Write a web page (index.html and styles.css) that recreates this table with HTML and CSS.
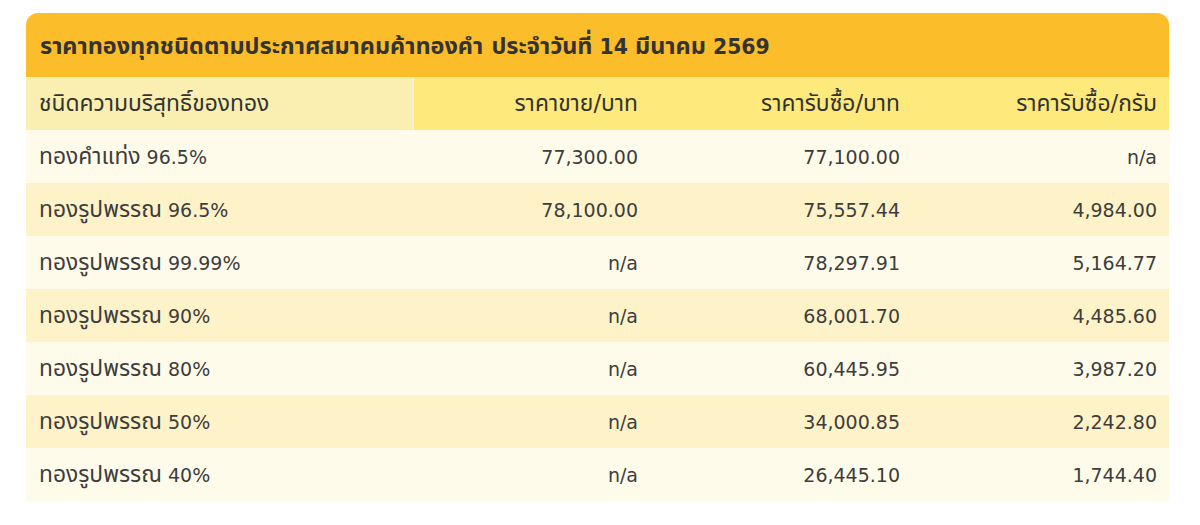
FILE: index.html
```html
<!DOCTYPE html>
<html lang="th">
<head>
<meta charset="utf-8">
<title>ราคาทอง</title>
<link rel="stylesheet" href="styles.css">
</head>
<body>
<div class="panel">
  <div class="title"><span class="th">ราคาทองทุกชนิดตามประกาศสมาคมค้าทองคำ ประจำวันที่</span> 14 <span class="th">มีนาคม</span> 2569</div>
  <table class="prices">
    <colgroup>
      <col class="c1"><col class="c2"><col class="c3"><col class="c4">
    </colgroup>
    <thead>
      <tr>
        <th class="first"><span class="th">ชนิดความบริสุทธิ์ของทอง</span></th>
        <th><span class="th">ราคาขาย/บาท</span></th>
        <th><span class="th">ราคารับซื้อ/บาท</span></th>
        <th><span class="th">ราคารับซื้อ/กรัม</span></th>
      </tr>
    </thead>
    <tbody>
      <tr><td><span class="th">ทองคำแท่ง</span> 96.5%</td><td>77,300.00</td><td>77,100.00</td><td>n/a</td></tr>
      <tr><td><span class="th">ทองรูปพรรณ</span> 96.5%</td><td>78,100.00</td><td>75,557.44</td><td>4,984.00</td></tr>
      <tr><td><span class="th">ทองรูปพรรณ</span> 99.99%</td><td>n/a</td><td>78,297.91</td><td>5,164.77</td></tr>
      <tr><td><span class="th">ทองรูปพรรณ</span> 90%</td><td>n/a</td><td>68,001.70</td><td>4,485.60</td></tr>
      <tr><td><span class="th">ทองรูปพรรณ</span> 80%</td><td>n/a</td><td>60,445.95</td><td>3,987.20</td></tr>
      <tr><td><span class="th">ทองรูปพรรณ</span> 50%</td><td>n/a</td><td>34,000.85</td><td>2,242.80</td></tr>
      <tr><td><span class="th">ทองรูปพรรณ</span> 40%</td><td>n/a</td><td>26,445.10</td><td>1,744.40</td></tr>
    </tbody>
  </table>
</div>
</body>
</html>
```
FILE: styles.css
```css
html, body {
  margin: 0;
  padding: 0;
  background: #ffffff;
}
body {
  font-family: "DejaVu Sans", "Noto Sans", "Noto Sans Thai", Tahoma, sans-serif;
  color: #3d3d3d;
}
.th {
  font-size: 1.2em;
}
.panel {
  width: 1143px;
  margin: 13px 0 0 26px;
  border-radius: 12px 12px 0 0;
  overflow: hidden;
}
.title {
  height: 64px;
  line-height: 66px;
  background: #fbbd2a;
  padding-left: 14px;
  font-size: 20.4px;
  font-weight: bold;
  color: #333333;
  white-space: nowrap;
}
.title .th {
  font-size: 1.15em;
}
.prices {
  width: 100%;
  border-collapse: collapse;
  table-layout: fixed;
  font-size: 19px;
}
.c1 { width: 387px; }
.c2 { width: 237px; }
.c3 { width: 262px; }
.c4 { width: 257px; }
.prices th {
  height: 53px;
  padding: 0 12px;
  font-weight: normal;
  text-align: right;
  background: #fee97c;
  color: #333;
}
.prices th.first {
  text-align: left;
  background: #faefb1;
  padding-left: 13px;
  border-right: 2px solid #fdf3c4;
}
.prices td {
  height: 53px;
  padding: 0 12px;
  text-align: right;
}
.prices td:first-child {
  text-align: left;
  padding-left: 13px;
}
.prices tbody tr:nth-child(odd) { background: #fffbea; }
.prices tbody tr:nth-child(even) { background: #fdf2c8; }
```
